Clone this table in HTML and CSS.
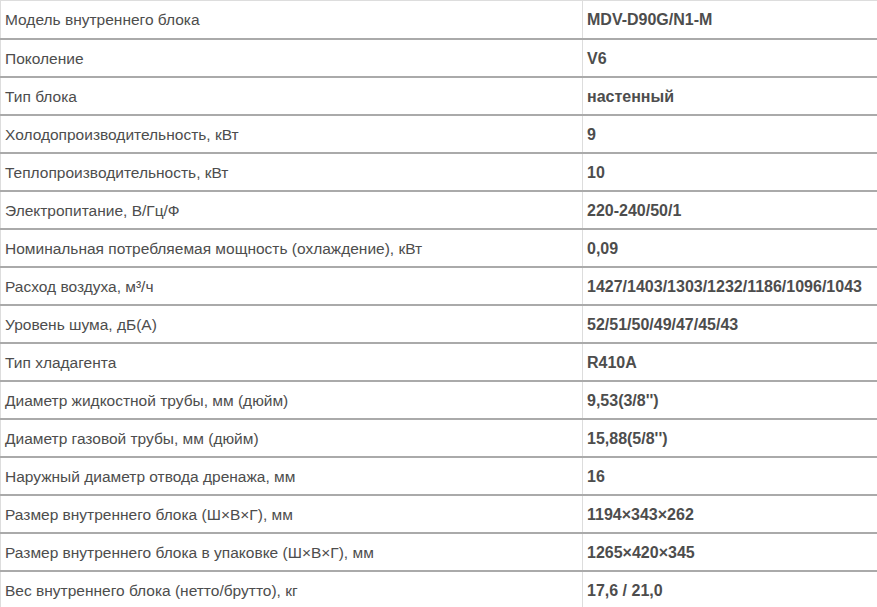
FILE: index.html
```html
<!DOCTYPE html>
<html lang="ru">
<head>
<meta charset="utf-8">
<link rel="stylesheet" href="styles.css">
</head>
<body>
<table class="specs">
<colgroup><col class="c-name"><col class="c-val"></colgroup>
<tbody>
<tr><td>Модель внутреннего блока</td><td>MDV-D90G/N1-M</td></tr>
<tr><td>Поколение</td><td>V6</td></tr>
<tr><td>Тип блока</td><td>настенный</td></tr>
<tr><td>Холодопроизводительность, кВт</td><td>9</td></tr>
<tr><td>Теплопроизводительность, кВт</td><td>10</td></tr>
<tr><td>Электропитание, В/Гц/Ф</td><td>220-240/50/1</td></tr>
<tr><td>Номинальная потребляемая мощность (охлаждение), кВт</td><td>0,09</td></tr>
<tr><td>Расход воздуха, м³/ч</td><td>1427/1403/1303/1232/1186/1096/1043</td></tr>
<tr><td>Уровень шума, дБ(А)</td><td>52/51/50/49/47/45/43</td></tr>
<tr><td>Тип хладагента</td><td>R410A</td></tr>
<tr><td>Диаметр жидкостной трубы, мм (дюйм)</td><td>9,53(3/8'')</td></tr>
<tr><td>Диаметр газовой трубы, мм (дюйм)</td><td>15,88(5/8'')</td></tr>
<tr><td>Наружный диаметр отвода дренажа, мм</td><td>16</td></tr>
<tr><td>Размер внутреннего блока (Ш×В×Г), мм</td><td>1194×343×262</td></tr>
<tr><td>Размер внутреннего блока в упаковке (Ш×В×Г), мм</td><td>1265×420×345</td></tr>
<tr><td>Вес внутреннего блока (нетто/брутто), кг</td><td>17,6 / 21,0</td></tr>
</tbody>
</table>
</body>
</html>
```

FILE: styles.css
```css
html, body {
  margin: 0;
  padding: 0;
  background: #fff;
}
.specs {
  width: 877px;
  table-layout: fixed;
  border-collapse: collapse;
  font-family: "Liberation Sans", Arial, sans-serif;
  font-size: 15.5px;
  color: #4d4d4d;
  border-top: 1px solid #ddd;
}
.c-name { width: 582px; }
.c-val { width: 295px; }
.specs td {
  box-sizing: border-box;
  height: 38px;
  padding: 2px 4px 0;
  border-left: 1px solid #ddd;
  border-right: 1px solid #ddd;
  border-bottom: 2px solid #aaa;
  vertical-align: middle;
  white-space: nowrap;
  overflow: hidden;
}
.specs td + td {
  font-weight: bold;
  font-size: 16px;
}
```
